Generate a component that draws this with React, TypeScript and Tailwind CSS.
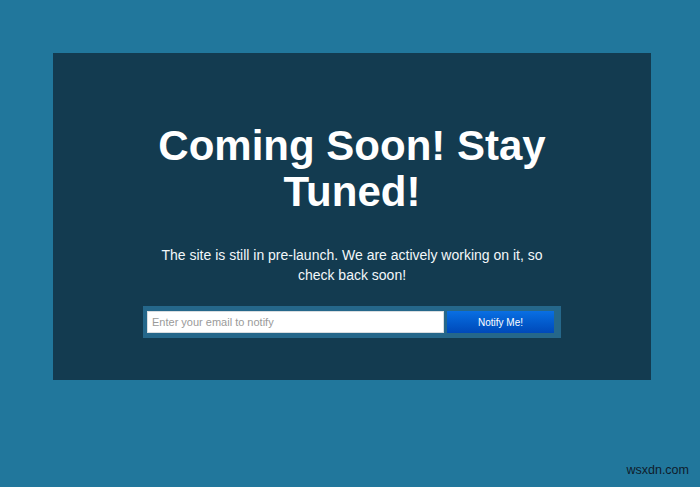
import React from 'react'

export default function App() {
    return (
        <div className="relative min-h-[487px] w-full bg-[#21779c] pt-[53px] font-['Liberation_Sans',Arial,sans-serif]">
            <div className="ml-[53px] flex h-[327px] w-[598px] flex-col items-center bg-[#133b50] pt-[70px] text-white">
                <h1 className="w-[420px] text-center text-[42px] font-bold leading-[46px]">
                    Coming Soon! Stay Tuned!
                </h1>

                <p className="mt-[30px] w-[392px] text-center text-[14px] leading-[20px] text-[#f2f7fa]">
                    The site is still in pre-launch. We are actively working on it, so check back soon!
                </p>

                <form
                    className="mt-[21px] flex h-[32px] w-[418px] items-center gap-[3px] bg-[#25678a] px-[4px]"
                    onSubmit={e => e.preventDefault()}
                >
                    <input
                        type="email"
                        placeholder="Enter your email to notify"
                        className="h-[22px] w-[297px] border border-[#d9dde0] bg-white px-[4px] text-[11px] text-gray-700 outline-none placeholder:text-[#9a9a9a]"
                    />
                    <button
                        type="submit"
                        className="h-[22px] w-[107px] bg-gradient-to-b from-[#0a6fe3] to-[#0049b9] text-[10px] text-white"
                    >
                        Notify Me!
                    </button>
                </form>
            </div>

            <span className="absolute right-[11px] bottom-[7px] text-[12.5px] text-[#0f1c2b]">wsxdn.com</span>
        </div>
    )
}
